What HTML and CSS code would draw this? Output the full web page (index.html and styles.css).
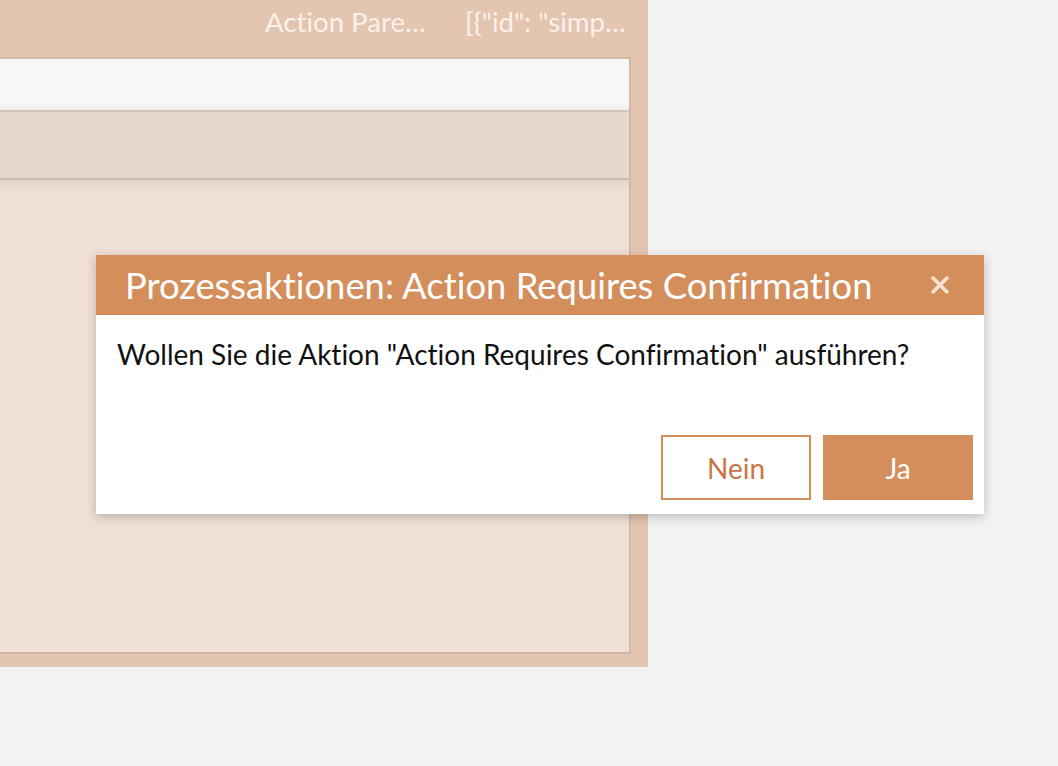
FILE: index.html
```html
<!DOCTYPE html>
<html lang="de">
<head>
<meta charset="utf-8">
<title>Prozessaktionen</title>
<link rel="stylesheet" href="styles.css">
</head>
<body>
<div class="app">
  <div class="panel">
    <div class="panel-head">
      <span class="col col-name">Action Pare…</span>
      <span class="col col-value">[{"id": "simp…</span>
    </div>
    <div class="inner">
      <div class="bar-light"></div>
      <div class="bar-tan"></div>
      <div class="inner-body"></div>
    </div>
  </div>
</div>

<div class="dialog" role="dialog">
  <div class="dialog-head">
    <span class="dialog-title">Prozessaktionen: Action Requires Confirmation</span>
    <span class="dialog-close" aria-label="Schließen">
      <svg width="22" height="22" viewBox="0 0 22 22"><path d="M3 3 L19 19 M19 3 L3 19" stroke="#f6e3d5" stroke-width="3.6" fill="none"/></svg>
    </span>
  </div>
  <div class="dialog-body">Wollen Sie die Aktion "Action Requires Confirmation" ausführen?</div>
  <div class="dialog-actions">
    <button class="btn btn-outline">Nein</button>
    <button class="btn btn-primary">Ja</button>
  </div>
</div>
</body>
</html>
```
FILE: styles.css
```css
html, body {
  margin: 0;
  padding: 0;
  background: #f2f2f2;
  font-family: Lato, "Open Sans", sans-serif;
  font-variant-ligatures: none;
}
.app {
  width: 1058px;
  height: 766px;
}
.panel {
  width: 648px;
  height: 667px;
  background: #e4c5b0;
  display: flex;
  flex-direction: column;
}
.panel-head {
  height: 57px;
  display: flex;
  align-items: flex-start;
  padding-left: 265px;
  box-sizing: border-box;
  color: #faf1eb;
  font-size: 27.6px;
  line-height: 44px;
}
.col-name { width: 200px; white-space: nowrap; }
.col-value { white-space: nowrap; }
.inner {
  width: 631px;
  height: 597px;
  box-sizing: border-box;
  border-top: 2px solid #d2b9a9;
  border-right: 2px solid #d0b9aa;
  border-bottom: 2px solid #d0b6a5;
  display: flex;
  flex-direction: column;
}
.bar-light {
  height: 51px;
  background: linear-gradient(#f7f7f7 85%, #f0eeec);
  border-bottom: 2px solid #d3c4ba;
}
.bar-tan {
  height: 66px;
  background: #e6d8cd;
  border-bottom: 2px solid #cdbcb0;
}
.inner-body {
  flex: 1;
  background: linear-gradient(#e5d3c8, #f0dfd5 10px);
}
.dialog {
  position: absolute;
  left: 96px;
  top: 255px;
  width: 888px;
  height: 259px;
  background: #fff;
  box-shadow: 0 3px 10px rgba(0, 0, 0, 0.22);
  display: flex;
  flex-direction: column;
}
.dialog-head {
  height: 60px;
  background: #d48e5b;
  display: flex;
  align-items: center;
  padding: 0 33px 0 29px;
}
.dialog-title {
  flex: 1;
  color: #fff;
  font-size: 36.4px;
  line-height: 60px;
  white-space: nowrap;
}
.dialog-close {
  display: flex;
  width: 22px;
  height: 22px;
}
.dialog-body {
  padding: 22px 21px 0;
  font-size: 28px;
  color: #111;
  line-height: 34px;
  flex: 1;
}
.dialog-actions {
  display: flex;
  justify-content: flex-end;
  gap: 12px;
  padding: 0 11px 14px;
}
.btn {
  width: 150px;
  height: 65px;
  box-sizing: border-box;
  font-family: Lato, "Open Sans", sans-serif;
  font-variant-ligatures: none;
  font-size: 28px;
  cursor: pointer;
}
.btn-outline {
  background: #fff;
  border: 2px solid #d48e5b;
  color: #c97646;
}
.btn-primary {
  background: #d48e5b;
  border: none;
  color: #fff;
}
```
